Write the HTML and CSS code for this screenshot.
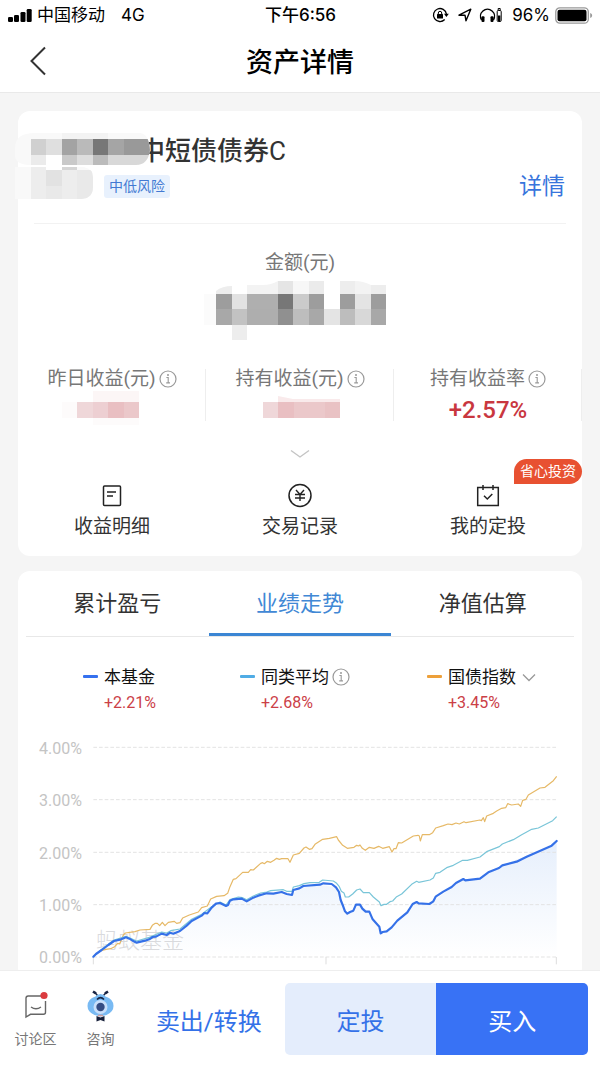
FILE: index.html
```html
<!DOCTYPE html>
<html lang="zh-CN">
<head>
<meta charset="utf-8">
<meta name="viewport" content="width=device-width, initial-scale=1">
<title>资产详情</title>
<link rel="stylesheet" href="styles.css">
</head>
<body>
<svg class="defs" aria-hidden="true">
  <symbol id="info" viewBox="0 0 18 18">
    <circle cx="9" cy="9" r="8" fill="none" stroke="currentColor" stroke-width="1.2"/>
    <path d="M7.4 7.5h1.8v5.3M7.2 12.9h3.8" fill="none" stroke="currentColor" stroke-width="1.1"/>
    <circle cx="9" cy="5" r="1" fill="currentColor"/>
  </symbol>
</svg>
<div class="app">
  <div class="status">
    <div class="status-left">
      <svg width="24" height="16" viewBox="0 0 24 16"><rect x="0" y="10" width="5" height="5" rx="1.3"/><rect x="6" y="8" width="5" height="7" rx="1.3"/><rect x="12.5" y="5" width="5" height="10" rx="1.3"/><rect x="18.7" y="2" width="5" height="13" rx="1.3"/></svg>
      <span>中国移动</span><span class="network">4G</span>
    </div>
    <div class="clock">下午6:56</div>
    <div class="status-right">
      <svg width="18" height="16" viewBox="0 0 18 16"><path d="M12.7 12.5A6.5 6.5 0 1 1 14.4 7" fill="none" stroke="#000" stroke-width="1.3"/><path d="M12 6.7h4.8l-2.4 3.3z"/><rect x="5" y="7" width="6" height="4.6" rx=".6"/><path d="M6.3 7.2V6a1.7 1.7 0 0 1 3.4 0v1.2" fill="none" stroke="#000" stroke-width="1"/></svg>
      <svg class="arrow" width="14" height="14" viewBox="0 0 14 14"><path d="M1 7.2 12.8 1.2 8 12.8 7 7.2z" fill="none" stroke="#000" stroke-width="1.4" stroke-linejoin="round"/></svg>
      <svg class="phones" width="25" height="16" viewBox="0 0 25 16"><path d="M2.6 13A7 7 0 1 1 14.4 13" fill="none" stroke="#000" stroke-width="1.4"/><rect x="2.5" y="9.3" width="3" height="5.7" rx="1"/><rect x="11.5" y="9.3" width="3" height="5.7" rx="1"/><path d="M19.2 3.5v-2h2v2" fill="none" stroke="#000"/><rect x="18.2" y="3.5" width="4" height="11" rx="1" fill="#fff" stroke="#000" stroke-width="1"/><path d="M19 8.5h2.4V14H19z"/></svg>
      <span class="percent">96%</span>
      <svg width="38" height="17" viewBox="0 0 38 17"><rect x=".8" y=".8" width="32.5" height="15.4" rx="4" fill="none" stroke="#999" stroke-width="1.3"/><rect x="2.5" y="2.7" width="29" height="11.600" rx="2"/><path d="M35.2 6c2.6 1 2.6 4 0 5z" fill="#999"/></svg>
    </div>
  </div>
  <header class="nav">
    <button class="back" aria-label="返回"><svg width="20" height="32" viewBox="0 0 20 32"><path d="M17 2.500 3.500 16 17 29.500" fill="none" stroke="#333" stroke-width="2"/></svg></button>
    <h1>资产详情</h1>
  </header>

  <main class="content">
    <section class="card summary">
      <div class="fund">
        <svg class="fund-mask" width="138" height="70" viewBox="15 132 138 70" aria-hidden="true">
          <defs><clipPath id="m1"><path d="M15 148q0-15 20-15h105q9 1 10 17-2 15-14 15H31q-14 0-16-8z"/></clipPath><clipPath id="m2"><path d="M15 167h69q9 2 9 10v10q0 11-11 12H15z"/></clipPath></defs>
          <g clip-path="url(#m1)"><path fill="#f9f9f9" d="M15 133h137v34H15z"/><path fill="#f3f3f3" d="M62 133h31v6H62zM93 133h15v6H93z"/><path fill="#d0d0d0" d="M31 139h15v16H31z"/><path fill="#dfdfdf" d="M46 139h16v16H46z"/><path fill="#a3a3a3" d="M62 139h15v16H62z"/><path fill="#bababa" d="M77 139h16v16H77z"/><path fill="#777" d="M93 139h15v16H93z"/><path fill="#a5a5a5" d="M108 139h16v16h-16z"/><path fill="#999" d="M124 139h28v16h-28z"/><path fill="#ebebeb" d="M31 155h15v10H31z"/><path fill="#fff" d="M46 155h16v10H46z"/><path fill="#c9c9c9" d="M62 155h15v10H62z"/><path fill="#ddd" d="M77 155h16v10H77z"/><path fill="#bbb" d="M93 155h15v10H93z"/><path fill="#d8d8d8" d="M108 155h44v10h-44z"/></g>
          <g clip-path="url(#m2)"><path fill="#f9f9f9" d="M15 167h80v33H15z"/><path fill="#ededed" d="M31 167h15v32H31zM62 167h15v32H62z"/><path fill="#e2e2e2" d="M46 170h16v16H46z"/><path fill="#e9e9e9" d="M46 186h16v13H46zM77 170h16v29H77z"/><path fill="#fff" d="M46 167h16v3H46z"/><path fill="#d5d5d5" d="M62 167h15v3H62z"/></g>
        </svg>
        <h2>中短债债券<span class="share-class">C</span></h2>
        <div class="fund-meta"><span class="risk">中低风险</span><a class="detail" href="#detail">详情</a></div>
      </div>
      <div class="amount">
        <div class="label">金额(元)</div>
        <svg width="188" height="62" viewBox="202 279 188 62" aria-hidden="true"><path fill="#ededed" d="M216 291q6-5 16-5v8h-16zM340 281h15v13h-15zM371 285h15v9h-15zM232 325h15v15h-15z"/><path fill="#f3f3f3" d="M247 285h16q8 0 15-4v13h-31zM355 281q8 0 16 4v9h-16z"/><path fill="#e5e5e5" d="M278 281h15v13h-15z"/><path fill="#ebebeb" d="M309 281h15v13h-15z"/><path fill="#f7f7f7" d="M293 281h16v13h-16z"/><path fill="#fbfbfb" d="M204 294h12v31h-12z"/><path fill="#9d9d9d" d="M216 294h16v15h-16z"/><path fill="#e2e2e2" d="M232 294h15v15h-15z"/><path fill="#afafaf" d="M247 294h31v15h-31z"/><path fill="#777" d="M278 294h15v15h-15z"/><path fill="#cbcbcb" d="M293 294h16v15h-16z"/><path fill="#9d9d9d" d="M309 294h15v15h-15zM340 294h15v15h-15zM371 294h15v15h-15z"/><path fill="#e4e4e4" d="M355 294h16v15h-16zM324 309h16v16h-16z"/><path fill="#a8a8a8" d="M216 309h16v16h-16zM309 309h15v16h-15zM371 309h15v16h-15z"/><path fill="#c2c2c2" d="M232 309h15v16h-15z"/><path fill="#aeaeae" d="M247 309h31v16h-31z"/><path fill="#909090" d="M278 309h15v16h-15z"/><path fill="#bdbdbd" d="M293 309h16v16h-16zM340 309h15v16h-15z"/><path fill="#d8d8d8" d="M355 309h16v16h-16z"/></svg>
      </div>
      <div class="stats">
        <div class="stat">
          <div class="label">昨日收益(元)<svg class="info"><use href="#info"/></svg></div>
          <svg width="108" height="36" viewBox="58 389 108 36" aria-hidden="true"><path fill="#fcf6f6" d="M93 391h46v11H93z"/><path fill="#fdfbfb" d="M62 402h15v16H62zM93 418h46v8H93z"/><path fill="#efd7d9" d="M77 402h16v16H77z"/><path fill="#edcfd2" d="M93 402h15v16H93z"/><path fill="#e9bfc2" d="M108 402h16v16h-16z"/><path fill="#ebc8ca" d="M124 402h15v16h-15z"/></svg>
        </div>
        <div class="stat">
          <div class="label">持有收益(元)<svg class="info"><use href="#info"/></svg></div>
          <svg width="108" height="36" viewBox="246 389 108 36" aria-hidden="true"><path fill="#f9eaeb" d="m278 396 15 3h47v3h-62z"/><path fill="#efd7d9" d="M263 402h15v16h-15z"/><path fill="#e9bfc2" d="M278 402h16v16h-16z"/><path fill="#ebc8ca" d="M294 402h31v16h-31z"/><path fill="#e9c2c4" d="M325 402h15v16h-15z"/></svg>
        </div>
        <div class="stat">
          <div class="label">持有收益率<svg class="info"><use href="#info"/></svg></div>
          <div class="rate">+2.57%</div>
        </div>
      </div>
      <button class="expand" aria-label="展开"><svg width="20" height="10" viewBox="0 0 20 10"><path d="m1 1.5 9 6.5 9-6.5" fill="none" stroke="#c4c4c4" stroke-width="1.4"/></svg></button>
      <div class="actions">
        <button class="action"><svg width="26" height="26" viewBox="0 0 26 26"><rect x="4.5" y="3" width="17" height="19.500" rx="1" fill="none" stroke="#222" stroke-width="1.5"/><path d="M8 9h9M8 13h6" stroke="#222" stroke-width="1.5"/></svg>收益明细</button>
        <button class="action"><svg width="26" height="26" viewBox="0 0 26 26"><circle cx="13" cy="12.500" r="11" fill="none" stroke="#222" stroke-width="1.5"/><path d="m9 7 4 4.500L17 7M13 11.500v6.500M8 11.500h10M8 15h10" fill="none" stroke="#222" stroke-width="1.4"/></svg>交易记录</button>
        <button class="action"><svg width="26" height="26" viewBox="0 0 26 26"><path d="M2.700 4.500h20.600v18H2.700zM8 2V7M18 2V7M9 12.800l3.300 3.200 5-5" fill="none" stroke="#222" stroke-width="1.5"/></svg>我的定投<span class="badge">省心投资</span></button>
      </div>
    </section>

    <section class="card">
      <div class="tabs" role="tablist">
        <button class="tab" role="tab">累计盈亏</button>
        <button class="tab active" role="tab" aria-selected="true">业绩走势</button>
        <button class="tab" role="tab">净值估算</button>
      </div>
      <div class="legend">
        <div class="series fund-series"><div class="series-name">本基金</div><div class="series-value">+2.21%</div></div>
        <div class="series peer-series"><div class="series-name">同类平均<svg class="info"><use href="#info"/></svg></div><div class="series-value">+2.68%</div></div>
        <div class="series bond-series"><div class="series-name">国债指数<svg class="down" width="14" height="9" viewBox="0 0 14 9"><path d="m1 1.5 6 6 6-6" fill="none" stroke="#999" stroke-width="1.3"/></svg></div><div class="series-value">+3.45%</div></div>
      </div>
      <svg class="chart" viewBox="0 0 564 250" role="img" aria-label="业绩走势">
        <defs><linearGradient id="area" x1="0" y1="0" x2="0" y2="1"><stop offset="0" stop-color="#e6effc"/><stop offset="1" stop-color="#fff"/></linearGradient></defs>
        <g transform="translate(2 0) scale(.33333)" fill="none" stroke-linejoin="round">
          <path fill="url(#area)" d="M220 680 282 633 318 622 350 638 425 611 480 603 545 557 600 519 618 528 640 508 680 514 740 490 816 495 838 475 900 464 948 472 982 551 1020 524 1048 545 1082 610 1115 592 1178 522 1228 522 1330 447 1380 446 1447 406 1595 347 1610 333V680z"/>
          <path d="M220 52H1610M220 209H1610M220 367H1610M220 524H1610M220 681H1610" stroke="#e3e3e3" stroke-width="3" stroke-dasharray="11 6"/>
          <path d="M220 681v22M918 681v22M1609 681v22" stroke="#ddd" stroke-width="3"/>
        </g>
        <text class="watermark" x="78" y="218">蚂蚁基金</text>
        <g transform="translate(2 0) scale(.33333)" fill="none" stroke-linejoin="round">
          <path stroke="#e6b967" stroke-width="3.6" d="M220 680 240 663 258 658 272 656 284 650 293 640 299 642 310 615 316 609 345 605 360 600 390 598 397 586 406 580 412 580 419 587 427 577 435 587 445 577 463 574 470 580 480 578 488 564 508 555 535 546 545 533 562 528 572 507 590 499 612 497 623 490 630 470 640 448 648 446 668 427 685 427 692 419 700 420 722 400 728 398 733 401 742 394 752 397 762 391 770 385 778 388 785 386 804 386 810 397 820 375 838 370 852 354 858 351 868 358 876 356 885 343 908 328 928 325 950 320 955 330 968 346 982 355 1002 352 1010 346 1016 348 1020 345 1027 355 1036 361 1048 352 1062 355 1076 349 1088 355 1108 350 1116 366 1122 356 1128 356 1135 338 1145 339 1180 318 1194 316 1198 318 1201 333 1207 314 1228 314 1238 308 1247 294 1270 287 1284 282 1296 284 1308 279 1318 282 1332 275 1338 278 1380 270 1384 272 1390 263 1394 275 1400 258 1420 250 1430 243 1445 235 1457 233 1463 221 1475 225 1495 222 1502 229 1508 211 1518 208 1525 195 1560 174 1575 172 1600 152 1610 139"/>
          <path stroke="#79c5d8" stroke-width="3.6" d="M220 680 245 658 282 630 318 619 350 633 388 622 425 606 440 609 452 602 480 597 515 568 545 553 575 530 600 516 618 525 630 509 655 501 668 503 680 509 700 498 722 489 740 486 752 482 790 479 800 484 816 484 820 471 838 467 852 461 870 458 898 457 908 450 940 453 950 460 958 470 964 484 972 489 976 501 986 501 998 492 1010 480 1020 477 1030 488 1048 488 1060 501 1078 516 1083 527 1092 523 1100 523 1110 515 1118 513 1130 500 1145 492 1175 463 1190 454 1196 457 1230 450 1240 444 1247 430 1260 427 1280 413 1300 406 1328 391 1342 391 1380 381 1400 365 1438 350 1447 342 1480 329 1505 314 1535 298 1555 294 1598 272 1610 260"/>
          <path stroke="#3571e8" stroke-width="6.5" stroke-linecap="round" d="M220 680 228 672 245 660 265 645 282 633 300 629 318 622 328 626 338 632 350 638 375 632 388 628 398 621 408 620 425 611 440 615 450 608 460 611 480 603 500 587 515 573 545 557 553 549 562 550 575 533 588 521 600 519 618 528 624 525 630 512 640 508 665 506 680 514 700 503 715 497 740 490 760 491 785 486 800 492 816 495 820 480 838 475 850 468 900 464 910 460 935 462 948 472 957 486 962 510 968 525 975 544 982 551 990 546 1000 542 1008 524 1020 524 1027 536 1037 545 1048 545 1058 568 1078 590 1082 610 1088 606 1100 604 1115 592 1132 572 1162 547 1178 522 1190 516 1196 520 1228 522 1240 514 1247 500 1270 485 1295 471 1308 459 1330 447 1336 451 1380 446 1405 427 1437 414 1447 406 1490 395 1520 380 1595 347 1610 333"/>
        </g>
        <g class="axis"><text x="64" y="24">4.00%</text><text x="64" y="76">3.00%</text><text x="64" y="129">2.00%</text><text x="64" y="181">1.00%</text><text x="64" y="233">0.00%</text></g>
      </svg>
    </section>
  </main>

  <footer class="toolbar">
    <button class="tool"><svg width="30" height="32" viewBox="0 0 30 32"><path d="M20 6H7.200Q5 6 5 8.200V27l4.500-2.700h13Q24.500 24.300 24.500 22.300V11M10 17q5 3.500 10 0" fill="none" stroke="#666" stroke-width="1.400"/><circle cx="23" cy="5.500" r="3.600" fill="#db3b3f"/></svg>讨论区</button>
    <button class="tool"><svg width="30" height="32" viewBox="0 0 30 32"><path d="M11.500 5.500 8.500 2M17.500 5.500l3-3.500" stroke="#172344" stroke-width="1.400"/><path d="M7 1.500l3 2M22 1.500l-3 2" stroke="#172344" stroke-width="2.600"/><path d="M14.500 4q-3 0-5 2.500Q1.500 9 1.500 16q0 6 7 9l6 1.500 6-1.500q7-3 7-9 0-7-8-9.500-2-2.500-5-2.500z" fill="#79baf3"/><path d="M11 9.500q3.500-3.500 7 0" fill="none" stroke="#172344" stroke-width="1.700"/><circle cx="14.500" cy="17" r="7" fill="#c9dffa"/><circle cx="14.500" cy="17" r="4.200" fill="#354c83"/><path d="m10.500 26 4 1.500 4-1.500v5.500l-4-1.500-4 1.500z" fill="#17203b"/><path d="M12 25.500h5" stroke="#cf9c9c" stroke-width="1.500"/></svg>咨询</button>
    <button class="trade sell">卖出/转换</button>
    <button class="trade invest">定投</button>
    <button class="trade buy">买入</button>
  </footer>
</div>
</body>
</html>
```
FILE: styles.css
```css
* { box-sizing: border-box; }
body {
  margin: 0;
  color: #333;
  background: #f5f5f5;
  font-family: Roboto, "Noto Sans CJK SC", sans-serif;
}
button {
  padding: 0;
  border: 0;
  background: none;
  color: inherit;
  font: inherit;
}
h1, h2 { margin: 0; font-weight: 500; }
svg { display: block; flex: none; }
.defs { position: absolute; width: 0; height: 0; }
.app { display: flex; flex-direction: column; height: 100vh; }

.status {
  display: grid;
  grid-template-columns: 1fr auto 1fr;
  align-items: center;
  height: 30px;
  padding: 0 7px 0 8px;
  background: #fff;
  color: #000;
  font: 17px/30px Inter, "Noto Sans CJK SC", sans-serif;
}
.status-left, .status-right { display: flex; align-items: center; }
.status-left { gap: 5px; }
.status-right { justify-content: flex-end; }
.network { margin-left: 11px; }
.clock { font-weight: 500; }
.arrow { margin-left: 8px; }
.phones { margin-left: 7px; }
.percent { margin: 0 5px 0 8px; }

.nav {
  display: grid;
  grid-template-columns: 60px 1fr 60px;
  align-items: center;
  height: 63px;
  border-bottom: 1px solid #e9e9e9;
  background: #fff;
}
.back { justify-self: end; padding-right: 12px; }
.nav h1 { padding-top: 3px; color: #000; font-size: 27px; line-height: 40px; text-align: center; }

.content {
  flex: 1;
  min-height: 0;
  padding: 18px 18px 0;
  overflow-y: auto;
  scrollbar-width: none;
}
.card { margin-bottom: 15px; border-radius: 12px; background: #fff; }
.summary { padding-bottom: 15px; }
.fund {
  position: relative;
  margin: 0 16px;
  padding: 21px 1px 21px 2px;
  border-bottom: 1px solid #f2f2f2;
}
.fund-mask { position: absolute; left: -19px; top: 21px; }
.fund h2 { padding-left: 103px; font-size: 26px; line-height: 38px; }
.share-class { font-weight: 400; }
.fund-meta {
  display: flex;
  align-items: center;
  justify-content: space-between;
  height: 32px;
  padding-left: 68px;
}
.risk {
  padding: 0 5px;
  border-radius: 3px;
  background: #e8f1fd;
  color: #4279d2;
  font-size: 14px;
  line-height: 23px;
}
.detail { padding-top: 2px; color: #3875dc; font-size: 23px; line-height: 32px; text-decoration: none; }

.amount { display: flex; flex-direction: column; align-items: center; padding-top: 25px; }
.amount svg { margin: 2px 8px 0 0; }
.label { display: flex; align-items: center; color: #777; font-size: 19px; line-height: 28px; }
.info { width: 18px; height: 18px; margin-left: 3px; color: #999; }
.stats { display: grid; grid-template-columns: repeat(3, 1fr); margin-top: 24px; }
.stat {
  position: relative;
  display: flex;
  flex-direction: column;
  align-items: center;
  height: 60px;
}
.stat::after {
  content: "";
  position: absolute;
  right: 0;
  top: 4px;
  bottom: 4px;
  width: 1px;
  background: #eee;
}
.stat > svg { margin-top: -4px; }
.rate { color: #c9373f; font-size: 24px; font-weight: 500; line-height: 34px; }
.expand { display: flex; justify-content: center; width: 100%; padding: 24px 0; }
.actions { display: grid; grid-template-columns: repeat(3, 1fr); }
.action {
  position: relative;
  display: flex;
  flex-direction: column;
  align-items: center;
  gap: 4px;
  font-size: 19px;
  line-height: 28px;
}
.badge {
  position: absolute;
  right: 0;
  top: -24px;
  padding: 0 6px;
  border-radius: 13px 13px 13px 0;
  background: #e85131;
  color: #fff;
  font-size: 14px;
  line-height: 25px;
}

.tabs { display: grid; grid-template-columns: repeat(3, 1fr); margin: 0 8px; border-bottom: 1px solid #e8e8e8; }
.tab { height: 65px; padding-top: 4px; border-bottom: 3px solid transparent; font-size: 22px; line-height: 58px; }
.tab.active { border-color: #3b86d4; color: #4188d5; }
.legend { display: grid; grid-template-columns: 157fr 187fr 155fr; padding: 27px 0 0 65px; }
.series { position: relative; padding-left: 21px; }
.series::before {
  content: "";
  position: absolute;
  left: 0;
  top: 11px;
  width: 15px;
  height: 3px;
  border-radius: 1px;
  background: #3571ef;
}
.peer-series::before { background: #50ace5; }
.bond-series::before { background: #eda03a; }
.series-name { display: flex; align-items: center; color: #111; font-size: 17px; line-height: 26px; }
.down { margin-left: 6px; }
.series-value { color: #cb4047; font-size: 16px; line-height: 25px; }
.chart { width: 100%; height: auto; margin-top: 15px; }
.axis { fill: #c4c4c4; font-size: 16px; text-anchor: end; }
.watermark { fill: #d9dadd; font-size: 22px; font-weight: 300; }

.toolbar {
  display: grid;
  grid-template-columns: 65px 65px 1fr 1fr 1fr;
  padding: 12px 12px 12px 3px;
  border-top: 1px solid #eee;
  background: #fff;
}
.tool {
  display: flex;
  flex-direction: column;
  align-items: center;
  gap: 6px;
  padding-top: 7px;
  color: #777;
  font-size: 14px;
  line-height: 22px;
}
.trade { height: 72px; color: #3471e8; font-size: 24px; }
.invest { border-radius: 5px 0 0 5px; background: #e4edfc; }
.buy { border-radius: 0 5px 5px 0; background: #3872f5; color: #fff; }
```
